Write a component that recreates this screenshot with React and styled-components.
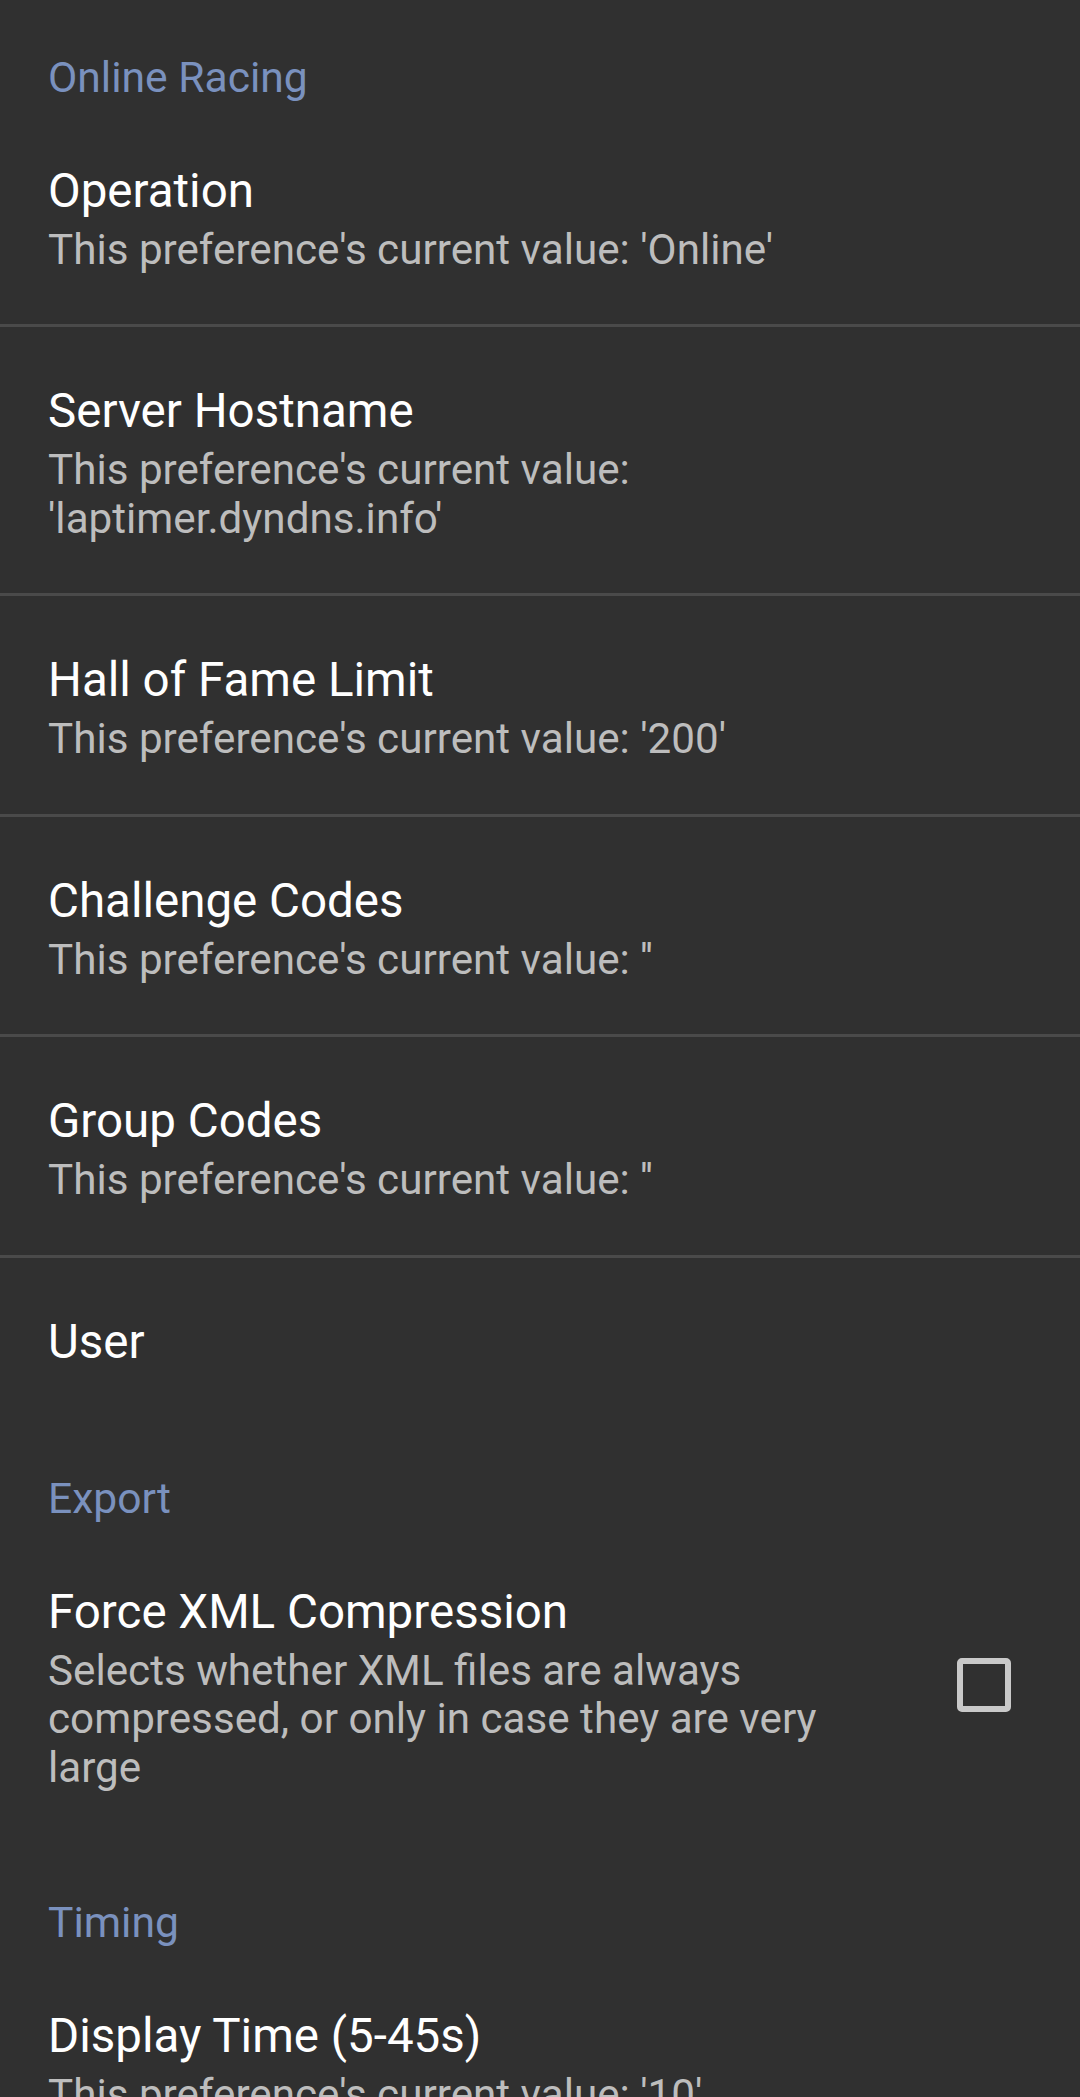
import React from "react";
import styled, { createGlobalStyle } from "styled-components";

const GlobalStyle = createGlobalStyle`
  html, body {
    margin: 0;
    padding: 0;
    background: #303030;
  }
  body {
    font-family: Roboto, "Noto Sans", "Liberation Sans", sans-serif;
    -webkit-font-smoothing: antialiased;
  }
  * { box-sizing: border-box; }
`;

const Screen = styled.div`
  width: 1080px;
  height: 2097px;
  overflow: hidden;
  background: #303030;
  display: flex;
  flex-direction: column;
`;

const Category = styled.section`
  display: flex;
  flex-direction: column;
`;

const CategoryTitle = styled.div`
  padding: ${(p) => (p.$first ? "52.5px" : "56px")} 48px 5px 48px;
  font-size: 42.6px;
  line-height: 49px;
  color: #7a91be;
`;

const Row = styled.div`
  display: flex;
  align-items: center;
  padding: 52px 69px ${(p) => (p.$single ? "44px" : "50px")} 48px;
  border-bottom: ${(p) => (p.$divider ? "3px solid #4a4a4a" : "none")};
`;

const TextCol = styled.div`
  flex: 1;
  display: flex;
  flex-direction: column;
`;

const Title = styled.div`
  font-size: 47.5px;
  line-height: 64px;
  color: #ffffff;
`;

const Summary = styled.div`
  margin-top: 3px;
  font-size: 42.2px;
  line-height: 48.5px;
  color: #bdbdbd;
  max-width: ${(p) => (p.$narrow ? "790px" : "none")};
  display: flex;
  flex-direction: column;
`;

const CheckBox = styled.div`
  flex: none;
  width: 54px;
  height: 54px;
  margin-left: 40px;
  margin-top: -2px;
  border: 6px solid #c9c9c9;
  border-radius: 5px;
`;

const v = (x) => `This preference's current value: '${x}'`;

const sections = [
  {
    title: "Online Racing",
    items: [
      { title: "Operation", summary: [v("Online")] },
      {
        title: "Server Hostname",
        summary: ["This preference's current value:", "'laptimer.dyndns.info'"],
      },
      { title: "Hall of Fame Limit", summary: [v("200")] },
      { title: "Challenge Codes", summary: [v("")] },
      { title: "Group Codes", summary: [v("")] },
      { title: "User" },
    ],
  },
  {
    title: "Export",
    items: [
      {
        title: "Force XML Compression",
        summary: [
          "Selects whether XML files are always compressed, or only in case they are very large",
        ],
        checkbox: true,
      },
    ],
  },
  {
    title: "Timing",
    items: [{ title: "Display Time (5-45s)", summary: [v("10")] }],
  },
];

function Preference({ item, divider }) {
  return (
    <Row $divider={divider} $single={!item.summary}>
      <TextCol>
        <Title>{item.title}</Title>
        {item.summary && (
          <Summary $narrow={item.checkbox}>
            {item.summary.map((line) => (
              <span key={line}>{line}</span>
            ))}
          </Summary>
        )}
      </TextCol>
      {item.checkbox && <CheckBox role="checkbox" aria-checked="false" />}
    </Row>
  );
}

export default function App() {
  return (
    <>
      <GlobalStyle />
      <Screen>
        {sections.map((s, si) => (
          <Category key={s.title}>
            <CategoryTitle $first={si === 0}>{s.title}</CategoryTitle>
            {s.items.map((it, i) => (
              <Preference
                key={it.title}
                item={it}
                divider={i < s.items.length - 1}
              />
            ))}
          </Category>
        ))}
      </Screen>
    </>
  );
}
